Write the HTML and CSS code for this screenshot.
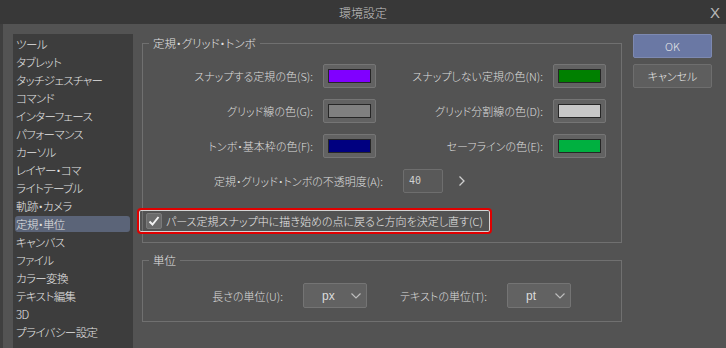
FILE: index.html
```html
<!DOCTYPE html>
<html lang="ja">
<head>
    <meta charset="UTF-8">
    <meta name="viewport" content="width=device-width, initial-scale=1.0">
    <title>環境設定</title>
    <link rel="stylesheet" href="styles.css">
</head>
<body>
    <div class="window">
        <div class="titlebar">
            <span></span>
            <span class="title">環境設定</span>
            <span class="close">X</span>
        </div>

        <div class="main">
            <ul class="nav">
                <li>ツール</li>
                <li>タブレット</li>
                <li>タッチジェスチャー</li>
                <li>コマンド</li>
                <li>インターフェース</li>
                <li>パフォーマンス</li>
                <li>カーソル</li>
                <li>レイヤー・コマ</li>
                <li>ライトテーブル</li>
                <li>軌跡・カメラ</li>
                <li class="active">定規・単位</li>
                <li>キャンバス</li>
                <li>ファイル</li>
                <li>カラー変換</li>
                <li>テキスト編集</li>
                <li>3D</li>
                <li>プライバシー設定</li>
            </ul>

            <div class="content">
                <fieldset class="group group-guides">
                    <legend>定規・グリッド・トンボ</legend>

                    <div class="swatch-grid">
                        <span class="label">スナップする定規の色(S):</span>
                        <span class="swatch"><span class="chip chip-snap"></span></span>
                        <span class="label">スナップしない定規の色(N):</span>
                        <span class="swatch"><span class="chip chip-nosnap"></span></span>

                        <span class="label">グリッド線の色(G):</span>
                        <span class="swatch"><span class="chip chip-grid"></span></span>
                        <span class="label">グリッド分割線の色(D):</span>
                        <span class="swatch"><span class="chip chip-divide"></span></span>

                        <span class="label">トンボ・基本枠の色(F):</span>
                        <span class="swatch"><span class="chip chip-crop"></span></span>
                        <span class="label">セーフラインの色(E):</span>
                        <span class="swatch"><span class="chip chip-safe"></span></span>
                    </div>

                    <div class="opacity-row">
                        <span class="label opacity-label">定規・グリッド・トンボの不透明度(A):</span>
                        <span class="num-input">40</span>
                        <svg class="arrow" width="8" height="12" viewBox="0 0 8 12">
                            <path d="M1.5 1.5 L6 6 L1.5 10.5" fill="none" stroke="#cfcfcf" stroke-width="1.3"/>
                        </svg>
                    </div>

                    <div class="check-row">
                        <span class="checkbox">
                            <svg width="14" height="14" viewBox="0 0 14 14">
                                <path d="M2.5 7.5 L5.5 10.5 L11.5 3" fill="none" stroke="#f2f2f2" stroke-width="2"/>
                            </svg>
                        </span>
                        <span class="check-text">パース定規スナップ中に描き始めの点に戻ると方向を決定し直す(C)</span>
                    </div>
                </fieldset>

                <fieldset class="group group-units">
                    <legend>単位</legend>
                    <div class="units-row">
                        <span class="label length-label">長さの単位(U):</span>
                        <span class="select">
                            <span class="select-value">px</span>
                            <svg width="12" height="8" viewBox="0 0 12 8">
                                <path d="M1.5 1.5 L6 6 L10.5 1.5" fill="none" stroke="#bdbdbd" stroke-width="1.2"/>
                            </svg>
                        </span>
                        <span class="label text-label">テキストの単位(T):</span>
                        <span class="select">
                            <span class="select-value">pt</span>
                            <svg width="12" height="8" viewBox="0 0 12 8">
                                <path d="M1.5 1.5 L6 6 L10.5 1.5" fill="none" stroke="#bdbdbd" stroke-width="1.2"/>
                            </svg>
                        </span>
                    </div>
                </fieldset>
            </div>

            <div class="actions">
                <button class="btn btn-ok">OK</button>
                <button class="btn">キャンセル</button>
            </div>
        </div>
    </div>
</body>
</html>
```

FILE: styles.css
```css
body {
    margin: 0;
    font-family: "Noto Sans CJK JP", "Noto Sans", sans-serif;
    font-size: 11px;
    font-weight: 300;
    font-feature-settings: "palt";
    color: #dedede;
    background-color: #535353;
}

.window {
    width: 726px;
    height: 348px;
    overflow: hidden;
}

.titlebar {
    height: 24px;
    display: grid;
    grid-template-columns: 1fr auto 1fr;
    align-items: center;
    background: #383838;
    color: #c4c4c4;
}

.title {
    font-size: 12px;
}

.close {
    justify-self: end;
    margin-right: 6px;
    font-family: "Liberation Sans", sans-serif;
    font-size: 15px;
    color: #b8b8b8;
}

.main {
    height: 324px;
    box-sizing: border-box;
    display: flex;
    align-items: flex-start;
    padding: 10px 0 0 10px;
    border-left: 3px solid #3f3f3f;
    background: #535353;
}

.nav {
    align-self: stretch;
    width: 120px;
    margin: 0;
    padding: 2px 3px 0 2px;
    box-sizing: border-box;
    list-style: none;
    background: #3d3d3d;
}

.nav li {
    height: 16px;
    line-height: 16px;
    margin-bottom: 2px;
    padding-left: 1px;
    border-radius: 3px;
    font-size: 11.5px;
    letter-spacing: -0.6px;
    color: #e4e4e4;
    white-space: nowrap;
}

.nav li.active {
    background: #5b6478;
}

.content {
    width: 480px;
    margin-left: 9px;
}

.group {
    margin: 0;
    padding: 0;
    border: 1px solid #707070;
    min-width: 0;
}

.group legend {
    margin-left: 6px;
    padding: 0 4px;
    line-height: 16px;
    font-size: 11.5px;
    color: #e2e2e2;
}

.group-guides {
    margin-top: 1px;
    padding-top: 13px;
    padding-bottom: 8px;
}

.group-units {
    margin-top: 9px;
    padding-top: 15px;
    padding-bottom: 13px;
}

.label {
    text-align: right;
    white-space: nowrap;
    color: #dcdcdc;
}

.swatch-grid {
    display: grid;
    grid-template-columns: 170px 53px 157px 53px;
    column-gap: 10px;
    row-gap: 11px;
    align-items: center;
}

.swatch {
    height: 24px;
    box-sizing: border-box;
    padding: 4px;
    border: 1px solid #757575;
    border-radius: 2px;
    background: #626262;
}

.chip {
    display: block;
    height: 100%;
    box-sizing: border-box;
    border: 1px solid #262626;
}

.chip-snap { background: #8000ff; }
.chip-nosnap { background: #008000; }
.chip-grid { background: #808080; }
.chip-divide { background: #c8c8c8; }
.chip-crop { background: #000080; }
.chip-safe { background: #00b040; }

.opacity-row {
    display: flex;
    align-items: center;
    margin-top: 11px;
}

.opacity-label {
    width: 240px;
}

.num-input {
    width: 40px;
    height: 24px;
    box-sizing: border-box;
    margin-left: 20px;
    padding-left: 5px;
    line-height: 22px;
    border: 1px solid #6e6e6e;
    border-radius: 2px;
    background: #595959;
    font-family: "DejaVu Sans Mono", monospace;
    font-size: 10px;
    color: #d0d0d0;
}

.arrow {
    margin-left: 15px;
}

.check-row {
    display: flex;
    align-items: center;
    width: fit-content;
    margin-top: 15px;
    margin-left: -6px;
    padding: 3px 7px 3px 7px;
    border: 2px solid #e00000;
    border-radius: 4px;
    box-shadow: inset 0 0 0 1px #d4d4d4;
}

.checkbox {
    width: 16px;
    height: 16px;
    box-sizing: border-box;
    display: flex;
    align-items: center;
    justify-content: center;
    border: 1px solid #7a7a7a;
    border-radius: 2px;
    background: #6b6b6b;
}

.check-text {
    margin-left: 4px;
    white-space: nowrap;
    color: #e6e6e6;
}

.units-row {
    display: flex;
    align-items: center;
}

.length-label {
    width: 140px;
}

.text-label {
    margin-left: 33px;
}

.select {
    width: 64px;
    height: 25px;
    box-sizing: border-box;
    margin-left: 20px;
    display: flex;
    align-items: center;
    padding: 0 4px 0 18px;
    border: 1px solid #747474;
    border-radius: 2px;
    background: #626262;
}

.select-value {
    flex: 1;
    font-family: "Liberation Sans", sans-serif;
    font-size: 12px;
    font-weight: 400;
    color: #dcdcdc;
}

.actions {
    width: 79px;
    margin-left: 11px;
    display: flex;
    flex-direction: column;
    gap: 6px;
}

.btn {
    height: 24px;
    padding: 0;
    font-family: inherit;
    font-size: 11px;
    font-weight: 300;
    font-feature-settings: "palt";
    color: #e8e8e8;
    background: #5e5e5e;
    border: 1px solid #6e6e6e;
    border-radius: 2px;
}

.btn-ok {
    background: #6a78a4;
    border-color: #7d89b1;
}
```
